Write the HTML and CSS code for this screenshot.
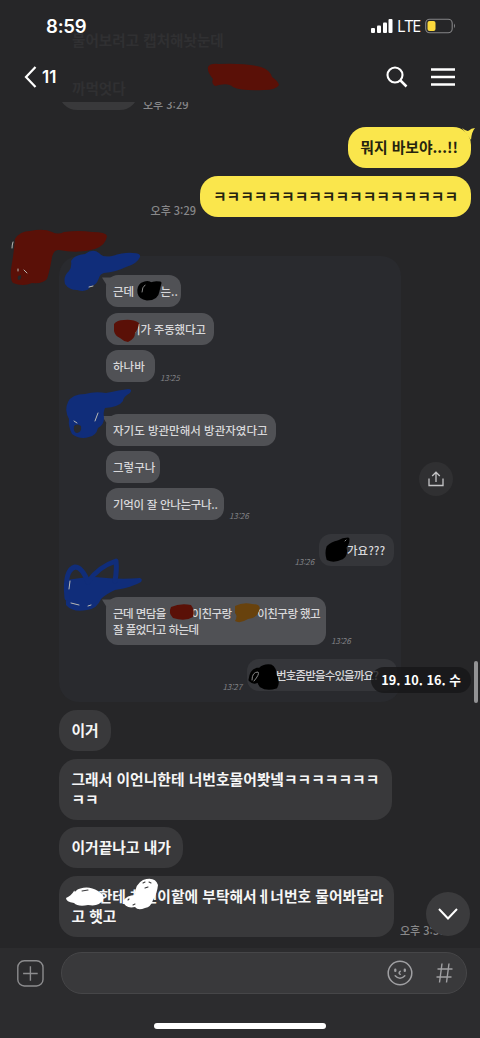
FILE: index.html
```html
<!DOCTYPE html>
<html lang="ko">
<head>
<meta charset="utf-8">
<title>Chat</title>
<link rel="stylesheet" href="styles.css">
</head>
<body>
<div class="phone">
  <header class="top">
    <div class="ghost ghost-a">물어보려고 캡처해놧눈데</div>
    <div class="ghost ghost-b">까먹엇다</div>
    <div class="status">
      <span class="clock">8:59</span>
      <span class="signals">
        <svg width="22" height="16" viewBox="0 0 22 16" fill="#fff"><rect x="0" y="10" width="4" height="5" rx="1"/><rect x="6" y="7.5" width="4" height="7.5" rx="1"/><rect x="12" y="4.5" width="4" height="10.500" rx="1"/><rect x="17.500" y="1" width="4" height="14" rx="1"/></svg>
        <span class="lte">LTE</span>
        <svg width="31" height="16" viewBox="0 0 31 16"><rect x=".7" y="1.200" width="26.500" height="13.500" rx="4" fill="none" stroke="#858587" stroke-width="1.100"/><rect x="2.500" y="3" width="8" height="10" rx="2" fill="#fbd83c"/><path d="M29 5.500q2 2.300 0 4.700z" fill="#858587"/></svg>
      </span>
    </div>
    <nav class="nav">
      <div class="back"><svg width="13" height="22" viewBox="0 0 13 22"><path d="M11.500 1 2 11l9.500 10" fill="none" stroke="#fff" stroke-width="2.200"/></svg><span>11</span></div>
      <div class="actions">
        <svg width="22" height="22" viewBox="0 0 22 22" fill="none" stroke="#fff" stroke-width="2.100"><circle cx="9" cy="9" r="7.500"/><path d="m14 14 6.500 6.500" stroke-width="2.500"/></svg>
        <svg width="24" height="18" viewBox="0 0 24 18" stroke="#fff" stroke-width="2.300"><path d="M0 1.500h24M0 9h24M0 16.500h24"/></svg>
      </div>
    </nav>
  </header>

  <main class="chat">
    <div class="row first"><div class="bubble blank"></div><span class="time">오후 3:29</span></div>
    <div class="row mine"><div class="bubble yellow">뭐지 바보야...!!<svg class="tail" width="14" height="14" viewBox="0 0 14 14"><path d="M1 1q5 4 7 2.500Q10 1.200 14 1q-3.500 4-4 12z" fill="#fae64c"/></svg></div></div>
    <div class="row mine"><span class="time">오후 3:29</span><div class="bubble yellow">ㅋㅋㅋㅋㅋㅋㅋㅋㅋㅋㅋㅋㅋㅋㅋㅋㅋㅋ</div></div>

    <div class="row photo-row">
      <section class="photo">
        <div class="msg them tip w75">근데 <i class="gap g23"></i>는..</div>
        <div class="msg them w108"><i class="gap g15"></i>이가 주동했다고</div>
        <div class="line"><div class="msg them w49">하나바</div><span class="stamp">13:25</span></div>
        <div class="msg them tip group w170">자기도 방관만해서 방관자였다고</div>
        <div class="msg them w54">그렇구나</div>
        <div class="line"><div class="msg them w118">기억이 잘 안나는구나..</div><span class="stamp">13:26</span></div>
        <div class="line right"><span class="stamp">13:26</span><div class="msg me w75"><i class="gap g21"></i>가요???</div></div>
        <div class="line double"><div class="msg them tip w220">근데 면담을 <i class="gap g23"></i>이친구랑 <i class="gap g23"></i>이친구랑 했고<br>잘 풀었다고 하는데</div><span class="stamp">13:26</span></div>
        <div class="line right last"><span class="stamp">13:27</span><div class="msg me w148"><i class="gap g22"></i>번호좀받을수있을까요?</div></div>
      </section>
      <div class="share"><svg width="16" height="16" viewBox="0 0 16 16" fill="none" stroke="#c4c4c6" stroke-width="1.300"><path d="M1 7.500v7h14v-7M8 11V1.500M4.200 5 8 1.200 11.800 5"/></svg></div>
    </div>

    <div class="row"><div class="bubble">이거</div></div>
    <div class="row"><div class="bubble">그래서 이언니한테 너번호물어봣넼ㅋㅋㅋㅋㅋㅋㅋ<br>ㅋㅋ</div></div>
    <div class="row"><div class="bubble">이거끝나고 내가</div></div>
    <div class="row"><div class="bubble wide"><i class="gap g27"></i>한테 차언이핱에 부탁해서ㅔ너번호 물어봐달라<br>고 햇고</div><span class="time">오후 3:30</span></div>
  </main>

  <footer class="composer">
    <div class="bar">
      <svg width="27" height="27" viewBox="0 0 27 27" fill="none" stroke="#8c8c8e" stroke-width="1.400"><rect x=".8" y=".8" width="25.200" height="25.200" rx="6.500"/><path d="M13.400 6.200v14.600M6.100 13.500h14.600"/></svg>
      <div class="field">
        <svg width="26" height="26" viewBox="0 0 26 26" fill="none" stroke="#a0a0a3" stroke-width="1.500" stroke-linecap="round"><circle cx="13" cy="13" r="11.800"/><path d="M8.300 9.700v1.200M17.800 9.700v1.200" stroke-width="2.300"/><path d="M13.200 11.300q-2.200 1.800 0 3M8.200 15.700q4.800 5 9.600 0"/></svg>
        <svg width="17" height="20" viewBox="0 0 17 20" fill="none" stroke="#a0a0a3" stroke-width="1.400"><path d="M6 .5 3.500 19.500M13 .5l-2.500 19M1.500 6H16.500M.5 14H15.500"/></svg>
      </div>
    </div>
    <div class="home"></div>
  </footer>

  <div class="date">19. 10. 16. 수</div>
  <div class="scrollbar"></div>
  <div class="down"><svg width="20" height="12" viewBox="0 0 20 12"><path d="m1 1 9 9.500L19 1" fill="none" stroke="#fff" stroke-width="2"/></svg></div>

  <svg class="marks" width="480" height="1038" viewBox="0 0 480 1038" stroke-linecap="round" stroke-linejoin="round">
    <g fill="#5a1007">
      <path d="M208 67q2-4 11-3 27-1 42 3 9 3 11 10 6 4 7 8-3 5-15 5-23 1-31-3-5-5-18-1-4-2-2-7-6-7-5-12z"/>
      <path d="M15 239q5-8 15-8 14-3 22 1 6 3 12 0 15-2 28 0 14 0 15 4-1 9-12 13-17 5-36 1-5-1-7 7-2 13-5 22-4 5-15 4-9 4-19 0-3-3-2-14 3-17 4-30z"/>
      <path d="M114 324q3-4 10-4 9-1 15 3-1 7-4 10 0 6-7 9-5-1-8-4-5-2-6-7z"/>
      <path d="M171 607q9-4 20-2 4 5 2 12-8 5-20 1-5-5-2-11z"/>
    </g>
    <path d="M18 276q-1 4 1 4 3-1 2-5z" fill="#262628"/>
    <g fill="#102d7a">
      <path d="M71 261q3-6 14-7 8-6 14-1 4 5 13 3 13-4 21-3 8 0 7 4-3 7-14 10-10 5-22 6-4 1-5 5-3 8-8 8-4 7-14 4-8 0-12-6-2-8 4-13 3-4 2-10z"/>
      <path d="M68 402q4-8 17-8 10-3 21-1 14-3 22-4 5 0 2 4-7 4-7 8-4 6-18 7-2 4-1 10 0 7-6 10-2 8-9 9-9 3-17-3-4-8-3-15-5-9-1-17z"/>
      <path d="M67 580q17-3 28-3 25 3 45 1 3 1 1 4-8 5-26 8-9 4-14 9-4 10-14 11-14 3-21-5-1-13 1-25z"/>
    </g>
    <path d="M67 598q-3-28 8-31 7 0 13 15 10-15 28-21 1 9-1 20" fill="none" stroke="#102d7a" stroke-width="5"/>
    <path d="M74 426q3-3 7 0 1 6-4 7-4 0-3-7z" fill="#292a2e"/>
    <g fill="none" stroke="#b9b9b5" stroke-width="1">
      <path d="M13 242q-1 3-1 6M18 269v2M24 270l3 3M98 413l-3 8M74 421l3 2M93 286l-4 1M70 581l-1 8M71 603l8 2M88 606l3-1"/>
    </g>
    <g fill="#000" stroke="#000" stroke-width="3">
      <path d="M142 284q6-3 9 0 3-2 9-1-1 4-2 8-1 8-11 8-7-1-8-6-1-6 3-9z"/>
      <path d="M328 547q4-4 10-5 5-3 10-3 0 5-3 8 2 8-3 11-8 4-14 1-2-6 0-12z"/>
      <path d="M250 680q1-11 10-11 4-4 11-3 4 2 4 9 4 7 1 12-9 3-15-1-3-4-2-7-4 6-9 1z"/>
    </g>
    <path d="M142 292q0-5 3-7M345 541l1-1M252 680q0-8 6-8 2 2-4 9" fill="none" stroke="#888" stroke-width="1"/>
    <path d="M235 606q8-4 17-2 10 0 7 7-2 7-11 8-8 5-13 2 3-5 0-8z" fill="#68420d"/>
    <g fill="#fff">
      <path d="M66 898q5-2 8-7 13-7 24 0 8 5 5 9-4 7-15 5-10 2-14-2-8-1-8-5z"/>
      <path d="M123 901q4-6 12-6 0-11 8-15 12-4 15 5-1 9-5 15-2 7-8 8-7 3-10-1-10 2-12-6z"/>
    </g>
    <path d="M75 891l2-2M82 891l6-1M143 883l2-1M149 882l2 1M145 888l3-1M128 900l1-1M133 905l2-1" stroke="#38383a" stroke-width="1.100"/>
  </svg>
</div>
</body>
</html>
```
FILE: styles.css
```css
* { box-sizing: border-box; }
body { margin: 0; background: #262628; color: #fff; font-family: "Noto Sans CJK KR", sans-serif; }
svg { display: block; flex: none; }
.phone { position: relative; display: flex; flex-direction: column; width: 480px; height: 1038px; overflow: hidden; }

.top { position: relative; height: 102px; flex: none; }
.ghost { position: absolute; left: 72px; font-size: 14.600px; font-weight: 700; line-height: 20px; color: #303032; }
.ghost-a { top: 30px; }
.ghost-b { top: 78px; }
.status { position: relative; display: flex; justify-content: space-between; align-items: center; height: 52px; padding: 0 24px 0 46px; }
.clock { font: 600 18.500px/24px Inter, sans-serif; letter-spacing: -.2px; }
.signals { display: flex; align-items: center; }
.lte { font: 500 16px/20px "Open Sans", sans-serif; width: 22px; margin: 0 6px 0 4px; letter-spacing: -.9px; }
.nav { position: relative; display: flex; justify-content: space-between; align-items: center; height: 50px; padding: 0 25px 0 24px; }
.back { display: flex; align-items: center; gap: 5px; font: 600 17px/24px Inter, sans-serif; }
.actions { display: flex; align-items: center; gap: 23px; }

.chat { display: flex; flex-direction: column; gap: 7.500px; height: 846px; flex: none; padding: 0 9.500px 0 59px; overflow: hidden; }
.row { display: flex; align-items: flex-end; gap: 6px; flex: none; }
.first { margin: -33px 0 9.500px; }
.first .time { margin-left: -1px; margin-bottom: -1px; }
.mine { justify-content: flex-end; }
.bubble { position: relative; padding: 10px 12.500px 11.200px; border-radius: 18px; background: #39393b; font-size: 14.800px; font-weight: 700; line-height: 20px; white-space: nowrap; color: #f6f6f6; }
.blank { width: 79px; height: 41px; }
.yellow { background: #fae64c; color: #25230f; }
.tail { position: absolute; top: 0; right: -4px; }
.wide { width: 335px; }
.time { font-size: 11px; font-weight: 500; line-height: 14px; color: #88888a; white-space: nowrap; }
.mine .time { margin: 0 -1.500px 0 0; }

.photo-row { align-items: center; gap: 18px; margin-top: 32px; }
.photo { width: 342px; height: 446px; flex: none; padding: 19px 4px 0 47px; border-radius: 20px; background: #292a2e; display: flex; flex-direction: column; align-items: flex-start; gap: 5.300px; font-size: 11.500px; font-weight: 500; }
.msg { position: relative; flex: none; padding: 8px 7px; border-radius: 12px; line-height: 16px; white-space: nowrap; color: #d8d8da; }
.them { background: #505155; }
.me { background: #35363a; }
.tip::before { content: ""; position: absolute; left: -4px; top: 2px; width: 14px; height: 8px; background: #505155; clip-path: polygon(0 0, 100% 0, 35% 100%); }
.gap { display: inline-block; }
.g15 { width: 17px; } .g21 { width: 21px; } .g22 { width: 22px; } .g23 { width: 23px; } .g27 { width: 27.200px; }
.w49 { width: 49px; } .w54 { width: 54px; } .w75 { width: 75px; } .w108 { width: 108px; } .w118 { width: 118px; } .w148 { width: 150px; } .w170 { width: 170px; } .w220 { width: 220px; }
.w108 { letter-spacing: -.2px; }
.w118 { letter-spacing: -.3px; }
.group { margin-top: 26.500px; }
.line { display: flex; align-items: flex-end; gap: 5px; }
.stamp { font-size: 8px; font-style: italic; font-weight: 400; line-height: 9px; color: #828286; letter-spacing: -.1px; }
.right { align-self: flex-end; margin: 8px 3px 0 0; }
.double { margin-top: 26.500px; }
.double .msg { letter-spacing: -.55px; }
.last { margin-right: 0; }
.last .msg { letter-spacing: -.850px; }
.share { display: grid; place-items: center; width: 34px; height: 34px; margin-left: -.500px; border-radius: 50%; background: #303032; }

.composer { height: 90px; flex: none; background: #2c2c2e; }
.bar { display: flex; align-items: center; gap: 17px; padding: 4px 13px 0 17px; }
.field { flex: 1; height: 42px; display: flex; align-items: center; justify-content: flex-end; gap: 23px; padding-right: 13px; border: 1px solid #464648; border-radius: 21px; background: #39393b; }
.home { width: 172px; height: 6px; margin: 29px auto 0; border-radius: 3px; background: #fff; }

.date { position: absolute; left: 371px; top: 667px; width: 100px; height: 26px; border-radius: 13px; background: rgba(22, 22, 24, .8); text-align: center; font-size: 12.700px; font-weight: 700; line-height: 25px; }
.scrollbar { position: absolute; left: 474px; top: 661px; width: 4px; height: 42px; border-radius: 2px; background: #929294; }
.down { position: absolute; left: 426px; top: 892px; width: 44px; height: 44px; border-radius: 50%; background: #3b3b3d; display: grid; place-items: center; }
.marks { position: absolute; left: 0; top: 0; pointer-events: none; }
```
